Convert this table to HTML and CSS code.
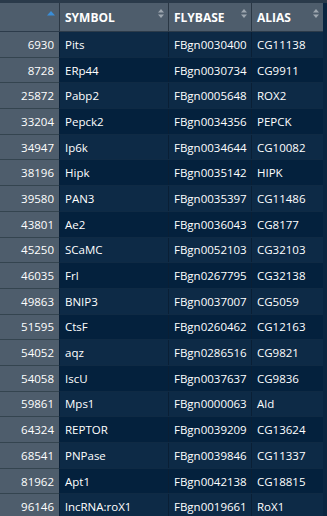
FILE: index.html
```html
<!DOCTYPE html>
<html>
<head>
<meta charset="utf-8">
<link rel="stylesheet" href="styles.css">
</head>
<body>
<div class="wrap">
  <div class="table">
    <div class="row head">
      <div class="cell idx"><svg class="sort" width="8" height="5" viewBox="0 0 8 5"><polygon points="4,0 8,4.5 0,4.5" fill="#3a8ed8"/></svg></div>
      <div class="cell"><span>SYMBOL</span><svg class="sort" width="6" height="9" viewBox="0 0 6 9"><polygon points="3,0 6,3.5 0,3.5" fill="#9ea7b0"/><polygon points="0,5.5 6,5.5 3,9" fill="#9ea7b0"/></svg></div>
      <div class="cell"><span>FLYBASE</span><svg class="sort" width="6" height="9" viewBox="0 0 6 9"><polygon points="3,0 6,3.5 0,3.5" fill="#9ea7b0"/><polygon points="0,5.5 6,5.5 3,9" fill="#9ea7b0"/></svg></div>
      <div class="cell"><span>ALIAS</span><svg class="sort" width="6" height="9" viewBox="0 0 6 9"><polygon points="3,0 6,3.5 0,3.5" fill="#9ea7b0"/><polygon points="0,5.5 6,5.5 3,9" fill="#9ea7b0"/></svg></div>
    </div>
    <div class="row odd"><div class="cell idx">6930</div><div class="cell">Pits</div><div class="cell">FBgn0030400</div><div class="cell">CG11138</div></div>
    <div class="row even"><div class="cell idx">8728</div><div class="cell">ERp44</div><div class="cell">FBgn0030734</div><div class="cell">CG9911</div></div>
    <div class="row odd"><div class="cell idx">25872</div><div class="cell">Pabp2</div><div class="cell">FBgn0005648</div><div class="cell">ROX2</div></div>
    <div class="row even"><div class="cell idx">33204</div><div class="cell">Pepck2</div><div class="cell">FBgn0034356</div><div class="cell">PEPCK</div></div>
    <div class="row odd"><div class="cell idx">34947</div><div class="cell">Ip6k</div><div class="cell">FBgn0034644</div><div class="cell">CG10082</div></div>
    <div class="row even"><div class="cell idx">38196</div><div class="cell">Hipk</div><div class="cell">FBgn0035142</div><div class="cell">HIPK</div></div>
    <div class="row odd"><div class="cell idx">39580</div><div class="cell">PAN3</div><div class="cell">FBgn0035397</div><div class="cell">CG11486</div></div>
    <div class="row even"><div class="cell idx">43801</div><div class="cell">Ae2</div><div class="cell">FBgn0036043</div><div class="cell">CG8177</div></div>
    <div class="row odd"><div class="cell idx">45250</div><div class="cell">SCaMC</div><div class="cell">FBgn0052103</div><div class="cell">CG32103</div></div>
    <div class="row even"><div class="cell idx">46035</div><div class="cell">Frl</div><div class="cell">FBgn0267795</div><div class="cell">CG32138</div></div>
    <div class="row odd"><div class="cell idx">49863</div><div class="cell">BNIP3</div><div class="cell">FBgn0037007</div><div class="cell">CG5059</div></div>
    <div class="row even"><div class="cell idx">51595</div><div class="cell">CtsF</div><div class="cell">FBgn0260462</div><div class="cell">CG12163</div></div>
    <div class="row odd"><div class="cell idx">54052</div><div class="cell">aqz</div><div class="cell">FBgn0286516</div><div class="cell">CG9821</div></div>
    <div class="row even"><div class="cell idx">54058</div><div class="cell">IscU</div><div class="cell">FBgn0037637</div><div class="cell">CG9836</div></div>
    <div class="row odd"><div class="cell idx">59861</div><div class="cell">Mps1</div><div class="cell">FBgn0000063</div><div class="cell">Ald</div></div>
    <div class="row even"><div class="cell idx">64324</div><div class="cell">REPTOR</div><div class="cell">FBgn0039209</div><div class="cell">CG13624</div></div>
    <div class="row odd"><div class="cell idx">68541</div><div class="cell">PNPase</div><div class="cell">FBgn0039846</div><div class="cell">CG11337</div></div>
    <div class="row even"><div class="cell idx">81962</div><div class="cell">Apt1</div><div class="cell">FBgn0042138</div><div class="cell">CG18815</div></div>
    <div class="row odd"><div class="cell idx">96146</div><div class="cell">lncRNA:roX1</div><div class="cell">FBgn0019661</div><div class="cell">RoX1</div></div>
  </div>
</div>
</body>
</html>
```

FILE: styles.css
```css
html, body {
  margin: 0;
  padding: 0;
  background: #0a2540;
  overflow: hidden;
}
body {
  width: 327px;
  height: 516px;
  font-family: "Open Sans", "Noto Sans", sans-serif;
  font-size: 11.5px;
  color: #ffffff;
}
.wrap {
  border-top: 3px solid #2a3a4a;
  padding-right: 4px;
  background: #0a2540;
  height: 513px;
  overflow: hidden;
}
.table {
  width: 323px;
}
.row {
  display: grid;
  grid-template-columns: 59px 109px 83px 72px;
  height: 25.7px;
  box-sizing: border-box;
  border-bottom: 1px solid #0f2a44;
}
.row.head {
  height: 29px;
  background: #4e5d6c;
  border-bottom: 1px solid #2c3b4a;
  font-weight: 700;
  font-size: 12px;
}
.row.odd { background: #0d2a46; }
.row.even { background: #04213d; }
.cell {
  display: flex;
  align-items: center;
  padding: 0 5px;
  border-left: 1px solid #0a1f35;
  white-space: nowrap;
  overflow: hidden;
  box-sizing: border-box;
}
.head .cell {
  justify-content: space-between;
  border-left: 1px solid #2a3744;
  padding: 0 4px 0 5px;
}
.cell.idx {
  border-left: none;
  justify-content: flex-end;
  background: #4e5d6c;
  padding-right: 5px;
}
.head .cell.idx {
  padding-right: 4px;
}
.row:not(.head) .cell.idx {
  margin-bottom: -1px;
  border-bottom: 1px solid #34444f;
}
.sort {
  align-self: flex-start;
  margin-top: 6px;
  flex: none;
}
.head .idx .sort {
  margin-top: 8px;
}
```
